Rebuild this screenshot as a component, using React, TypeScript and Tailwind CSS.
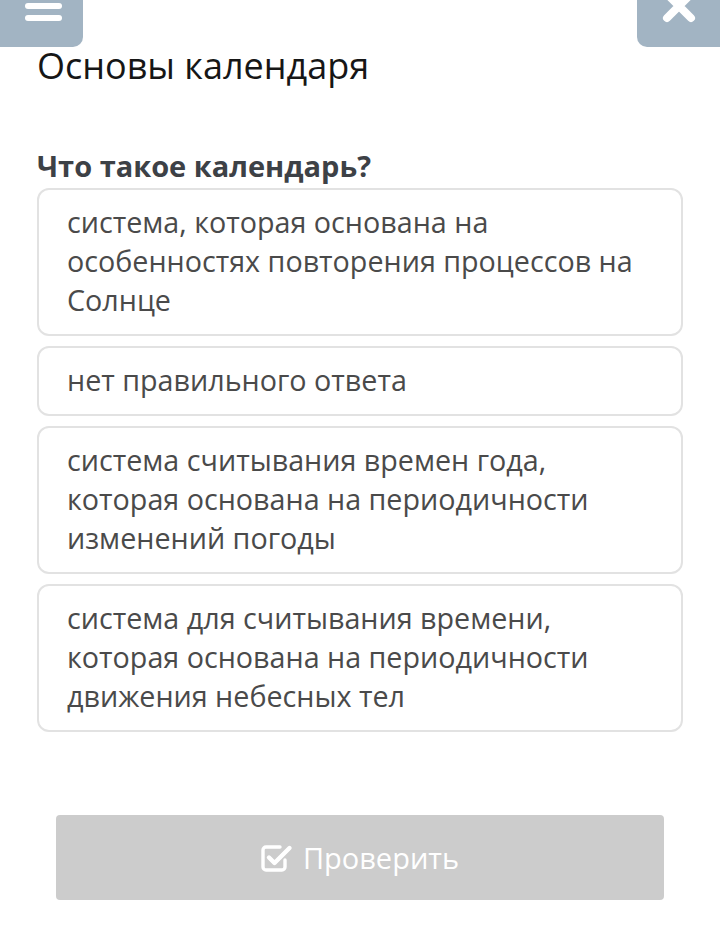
const answers = [
  'система, которая основана на особенностях повторения процессов на Солнце',
  'нет правильного ответа',
  'система считывания времен года, которая основана на периодичности изменений погоды',
  'система для считывания времени, которая основана на периодичности движения небесных тел',
];

function MenuIcon() {
  return (
    <svg width="40" height="24" viewBox="0 0 40 24">
      <rect x="2" y="3" width="37" height="6" rx="3" fill="white" />
      <rect x="2" y="15" width="37" height="6" rx="3" fill="white" />
    </svg>
  );
}

function CloseIcon() {
  return (
    <svg width="40" height="24" viewBox="0 0 40 24">
      <path d="M8 -6 L32 18 M32 -6 L8 18" stroke="white" strokeWidth="8" strokeLinecap="round" />
    </svg>
  );
}

function CheckSquareIcon() {
  return (
    <svg width="32" height="30" viewBox="0 0 32 30" fill="none">
      <path
        d="M24 17 V24 a3 3 0 0 1 -3 3 H5 a3 3 0 0 1 -3 -3 V7 a3 3 0 0 1 3 -3 H19"
        stroke="white"
        strokeWidth="3.4"
        strokeLinecap="round"
      />
      <path d="M8 14.5 L13.5 20 L28.5 5" stroke="white" strokeWidth="4.4" strokeLinecap="round" strokeLinejoin="round" />
    </svg>
  );
}

export default function App() {
  return (
    <div className="w-[720px] h-[945px] bg-white overflow-hidden font-['Open_Sans',sans-serif]">
      <div className="flex justify-between h-[47px]">
        <div className="w-[83px] h-[47px] bg-[#a2b4c3] rounded-br-[10px] flex justify-center pl-[2px]">
          <MenuIcon />
        </div>
        <div className="w-[83px] h-[47px] bg-[#a2b4c3] rounded-bl-[10px] flex justify-center">
          <CloseIcon />
        </div>
      </div>

      <div className="px-[37px]">
        <h1 className="mt-[1px] text-[36px] leading-[36px] text-[#161616] font-normal">Основы календаря</h1>
        <h2 className="mt-[65px] text-[29px] leading-[34px] font-bold text-[#3d4146]">Что такое календарь?</h2>

        <div className="mt-[5px] flex flex-col gap-[10px]">
          {answers.map((a) => (
            <div
              key={a}
              className="border-2 border-[#e2e2e2] rounded-[12px] pl-[28px] pr-[28px] pt-[12px] pb-[15px] text-[28.7px] leading-[39px] text-[#4a4a4a]"
            >
              {a}
            </div>
          ))}
        </div>
      </div>

      <div className="px-[56px] mt-[83px]">
        <button className="w-full h-[85px] bg-[#cccccc] rounded-[4px] flex items-center justify-center gap-[10px] text-white text-[29px]">
          <CheckSquareIcon />
          <span>Проверить</span>
        </button>
      </div>
    </div>
  );
}
